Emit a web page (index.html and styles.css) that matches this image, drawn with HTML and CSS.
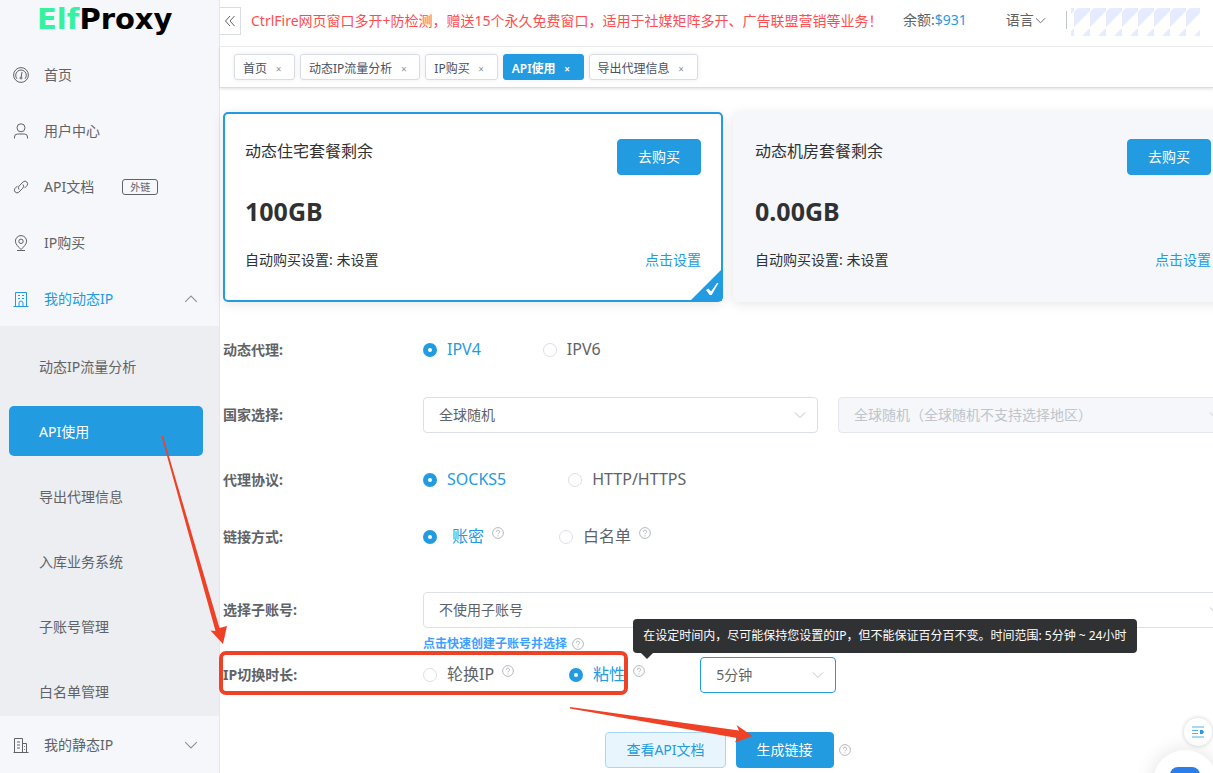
FILE: index.html
```html
<!DOCTYPE html>
<html lang="zh-CN">
<head>
<meta charset="utf-8">
<title>ElfProxy - API使用</title>
<link rel="stylesheet" href="styles.css">
</head>
<body>
<svg class="defs" aria-hidden="true">
  <symbol id="help" viewBox="0 0 12 12"><circle cx="6" cy="6" r="5.4" fill="none" stroke="currentColor"/><path d="M4.4 4.8a1.6 1.6 0 1 1 2.3 1.4c-.5.3-.7.5-.7 1.1M6 8.3v1" fill="none" stroke="currentColor"/></symbol>
  <symbol id="down" viewBox="0 0 12 12"><path d="M1 3.500l5 5 5-5" fill="none" stroke="currentColor"/></symbol>
</svg>
<div class="app">
  <aside class="sidebar">
    <div class="logo"><span class="logo-elf">Elf</span>Proxy</div>
    <nav class="menu">
      <a class="item" href="#"><svg class="icon" viewBox="0 0 16 16"><circle cx="8" cy="8" r="7.400"/><path d="M4 11.800a5.300 5.300 0 1 1 8 0M8.200 10l.8-5"/><circle cx="8" cy="11" r="1"/></svg>首页</a>
      <a class="item" href="#"><svg class="icon" viewBox="0 0 16 16"><circle cx="8" cy="4.800" r="4"/><path d="M1.500 15.500v-1.500a3 3 0 0 1 3-3h7a3 3 0 0 1 3 3v1.500"/></svg>用户中心</a>
      <a class="item" href="#"><svg class="icon" viewBox="0 0 16 16"><path d="M6 10.500a3 3 0 0 1 .2-3.700l4-4a2.700 2.700 0 0 1 3.800 3.800l-2.500 2.500M10 5.500a3 3 0 0 1-.2 3.700l-4 4A2.700 2.700 0 0 1 2 9.400l2.500-2.500"/></svg>API文档<span class="tag">外链</span></a>
      <a class="item" href="#"><svg class="icon" viewBox="0 0 16 16"><path d="M8 14.500C5 11.500 2.400 9 2.400 6.200a5.600 5.600 0 0 1 11.200 0C13.600 9 11 11.500 8 14.500zM4 15.500h8"/><circle cx="8" cy="6.300" r="2.200"/></svg>IP购买</a>
      <a class="item open" href="#"><svg class="icon" viewBox="0 0 16 16"><path d="M2.500 15V1.500h11V15M.5 15.500h15M5 4.500h2M9 4.500h2M5 7.500h2M9 7.500h2M6 15v-3a2 2 0 0 1 4 0v3"/></svg>我的动态IP<svg class="caret up"><use href="#down"/></svg></a>
    </nav>
    <nav class="submenu">
      <a class="subitem" href="#">动态IP流量分析</a>
      <a class="subitem active" href="#">API使用</a>
      <a class="subitem" href="#">导出代理信息</a>
      <a class="subitem" href="#">入库业务系统</a>
      <a class="subitem" href="#">子账号管理</a>
      <a class="subitem" href="#">白名单管理</a>
    </nav>
    <nav class="menu">
      <a class="item" href="#"><svg class="icon" viewBox="0 0 16 16"><path d="M1.500 15V1.500h8V15M9.500 6.500h4V15M.5 15.500h15M4 5h3M4 8h3M4 11h3M11.500 9v.8M11.500 12v.8"/></svg>我的静态IP<svg class="caret"><use href="#down"/></svg></a>
    </nav>
  </aside>

  <main class="main">
    <header class="topbar">
      <button class="collapse" aria-label="收起菜单"><svg class="collapse-icon" viewBox="0 0 12 12"><path d="M6 1L1.500 6 6 11M10.500 1L6 6l4.500 5"/></svg></button>
      <p class="notice">CtrlFire网页窗口多开+防检测，赠送15个永久免费窗口，适用于社媒矩阵多开、广告联盟营销等业务！</p>
      <span class="balance">余额:<b class="amount">$931</b></span>
      <button class="lang">语言<svg class="lang-caret"><use href="#down"/></svg></button>
      <svg class="account" aria-hidden="true"><defs><pattern id="mosaic" x="3" width="16" height="28" patternUnits="userSpaceOnUse"><path d="M4 0h12v3L0 19V4zM8 28l8-8v8z" fill="#e6ecff"/></pattern></defs><rect width="129" height="28" fill="url(#mosaic)"/></svg>
    </header>
    <nav class="tabs">
      <a class="tab" href="#">首页<span class="close">×</span></a>
      <a class="tab" href="#">动态IP流量分析<span class="close">×</span></a>
      <a class="tab" href="#">IP购买<span class="close">×</span></a>
      <a class="tab current" href="#">API使用<span class="close">×</span></a>
      <a class="tab" href="#">导出代理信息<span class="close">×</span></a>
    </nav>

    <div class="content">
      <section class="cards">
        <article class="card selected">
          <div class="card-head"><h2 class="card-title">动态住宅套餐剩余</h2><button class="btn buy">去购买</button></div>
          <div class="traffic">100GB</div>
          <div class="card-foot"><span>自动购买设置: 未设置</span><a class="link" href="#">点击设置</a></div>
          <svg class="corner" viewBox="0 0 32 32"><path class="corner-fill" d="M32 0v32H0z"/><path class="corner-tick" d="M16 21l2.500-1.500 2.500 3 6-8.500 1.500 0-6.800 12h-2z"/></svg>
        </article>
        <article class="card">
          <div class="card-head"><h2 class="card-title">动态机房套餐剩余</h2><button class="btn buy">去购买</button></div>
          <div class="traffic">0.00GB</div>
          <div class="card-foot"><span>自动购买设置: 未设置</span><a class="link" href="#">点击设置</a></div>
        </article>
      </section>

      <form class="form">
        <div class="row">
          <span class="label">动态代理:</span>
          <div class="radios">
            <label class="radio"><input type="radio" name="ip" checked><span>IPV4</span></label>
            <label class="radio"><input type="radio" name="ip"><span>IPV6</span></label>
          </div>
        </div>
        <div class="row">
          <label class="label" for="country">国家选择:</label>
          <div class="fields">
            <div class="select"><select id="country"><option>全球随机</option></select><svg class="arrow"><use href="#down"/></svg></div>
            <div class="select disabled"><select aria-label="地区" disabled><option>全球随机（全球随机不支持选择地区）</option></select><svg class="arrow"><use href="#down"/></svg></div>
          </div>
        </div>
        <div class="row">
          <span class="label">代理协议:</span>
          <div class="radios">
            <label class="radio"><input type="radio" name="proto" checked><span>SOCKS5</span></label>
            <label class="radio"><input type="radio" name="proto"><span>HTTP/HTTPS</span></label>
          </div>
        </div>
        <div class="row tight">
          <span class="label">链接方式:</span>
          <div class="radios hinted">
            <label class="radio"><input type="radio" name="auth" checked><span class="indent">账密</span><svg class="help raised"><use href="#help"/></svg></label>
            <label class="radio"><input type="radio" name="auth"><span>白名单</span><svg class="help raised"><use href="#help"/></svg></label>
          </div>
        </div>
        <div class="row wide">
          <label class="label" for="sub">选择子账号:</label>
          <div class="fields">
            <div class="select"><select id="sub"><option>不使用子账号</option></select><svg class="arrow"><use href="#down"/></svg></div>
          </div>
        </div>
        <div class="create"><a class="create-link" href="#">点击快速创建子账号并选择</a><svg class="help"><use href="#help"/></svg></div>
        <div class="row duration">
          <span class="label">IP切换时长:</span>
          <div class="radios hinted">
            <label class="radio"><input type="radio" name="mode"><span>轮换IP</span><svg class="help raised"><use href="#help"/></svg></label>
            <label class="radio"><input type="radio" name="mode" checked><span>粘性</span><span class="anchor"><svg class="help raised"><use href="#help"/></svg><span class="tooltip" role="tooltip">在设定时间内，尽可能保持您设置的IP，但不能保证百分百不变。时间范围: 5分钟 ~ 24小时</span></span></label>
            <div class="select minutes"><select aria-label="时长"><option>5分钟</option></select><svg class="arrow"><use href="#down"/></svg></div>
          </div>
        </div>
        <div class="actions">
          <button type="button" class="btn plain">查看API文档</button>
          <button type="button" class="btn">生成链接</button>
          <svg class="help"><use href="#help"/></svg>
        </div>
      </form>
    </div>
  </main>
</div>

<button class="float-list" aria-label="公告"><svg class="float-icon" viewBox="0 0 14 14"><path d="M1 2h12M1 5.500h6M1 8.500h6M1 12h12"/><path class="solid" d="M9 5h2.500L13 7l-1.500 2H9z"/></svg></button>
<button class="float-chat" aria-label="客服"><span class="chat-shape"></span></button>

<svg class="marks" viewBox="0 0 1213 773" aria-hidden="true">
  <rect x="221" y="653" width="405" height="40" rx="5"/>
  <path d="M161.500 436h1.500L219.500 628 227 626 223 644 210.500 630.500 215.500 631z"/>
  <path d="M570 707L739 730.500 736.500 725 752.500 736 735 742.500 737 738 570 708.500z"/>
</svg>
</body>
</html>
```
FILE: styles.css
```css
* { box-sizing: border-box; }
body {
  margin: 0;
  height: 100vh;
  overflow: hidden;
  background: #fff;
  color: #606266;
  font: 14px/20px "Noto Sans", "Noto Sans CJK SC", sans-serif;
}
button, select { font: inherit; color: inherit; }
button { cursor: pointer; }
a { color: inherit; text-decoration: none; }
svg { display: block; flex: none; }
.defs { position: absolute; width: 0; height: 0; }
.app { display: flex; min-height: 100vh; }

.sidebar {
  flex: none;
  width: 220px;
  background: #f5f7fb;
  border-right: 1px solid #e4e6ea;
}
.logo {
  height: 46px;
  padding-left: 37px;
  font: 700 29px/39px "DejaVu Sans", sans-serif;
  color: #000;
}
.logo-elf { color: #36f2a0; }
.item {
  display: flex;
  align-items: center;
  height: 56px;
  padding: 2px 21px 0 13px;
}
.icon {
  width: 16px;
  height: 16px;
  margin-right: 15px;
  fill: none;
  stroke: currentColor;
}
.open { color: #229be0; }
.caret { width: 14px; height: 14px; margin-left: auto; color: #909399; }
.up { transform: rotate(180deg); }
.tag {
  margin-left: 28px;
  padding: 0 7px;
  border: 1px solid #606266;
  border-radius: 3px;
  font-size: 10px;
  line-height: 14px;
}
.submenu {
  display: flex;
  flex-direction: column;
  gap: 15px;
  padding: 15px 16px 0 9px;
  background: #eceef2;
}
.subitem {
  height: 50px;
  padding-left: 30px;
  border-radius: 5px;
  line-height: 52px;
}
.active { background: #229be0; color: #fff; }

.main { flex: 1; min-width: 0; }
.topbar {
  display: flex;
  align-items: center;
  height: 47px;
  padding-bottom: 4px;
  border-bottom: 1px solid #f0f0f0;
}
.collapse {
  width: 21px;
  height: 28px;
  padding: 0 4px;
  border: 1px solid #d8dce5;
  border-left: 0;
  background: #fff;
}
.collapse-icon { width: 12px; height: 12px; fill: none; stroke: #606266; }
.notice { margin: 0 0 0 10px; color: #ff4d4f; white-space: nowrap; flex: none; width: 652px; }
.balance { padding-bottom: 2px; white-space: nowrap; }
.amount { font-weight: 400; color: #229be0; }
.lang {
  display: flex;
  align-items: center;
  gap: 1px;
  margin: 0 0 2px 39px;
  padding: 0 20px 0 0;
  border: 0;
  border-right: 1px solid #c0c4cc;
  background: none;
  line-height: 18px;
  white-space: nowrap;
}
.lang-caret { width: 11px; height: 11px; }
.account { width: 129px; height: 28px; margin: 2px 0 0 4px; }

.tabs {
  display: flex;
  align-items: center;
  gap: 5px;
  height: 41px;
  padding-left: 14px;
  border-bottom: 1px solid #d8dce5;
  box-shadow: 0 1px 3px rgba(0, 0, 0, .12);
}
.tab {
  display: flex;
  align-items: center;
  height: 26px;
  padding: 3px 12px 0 8px;
  border: 1px solid #d8dce5;
  border-radius: 3px;
  box-shadow: 0 0 4px rgba(0, 0, 0, .08);
  color: #495060;
  font-size: 12px;
}
.close { width: 7px; margin-left: 8px; color: #909399; font-size: 10px; text-align: center; }
.current { background: #229be0; border-color: #229be0; color: #fff; font-weight: 600; }
.current .close { color: #fff; }

.content { margin-right: -20px; padding: 24px 0 0 3px; }
.cards { display: grid; grid-template-columns: 1fr 1fr; gap: 10px; }
.card {
  position: relative;
  height: 190px;
  padding: 25px 20px 0;
  border: 2px solid #f5f7fb;
  border-radius: 5px;
  background: #f5f7fb;
  box-shadow: 0 2px 12px rgba(0, 0, 0, .1);
  color: #303133;
}
.selected { border-color: #229be0; background: #fff; }
.card-head { display: flex; justify-content: space-between; }
.card-title { margin: 0; font-size: 16px; font-weight: 400; line-height: 24px; }
.traffic { margin-top: 19px; font-size: 25px; font-weight: 700; line-height: 34px; }
.card-foot { display: flex; justify-content: space-between; margin-top: 22px; }
.link { color: #229be0; }
.corner { position: absolute; right: -1px; bottom: -1px; width: 32px; height: 32px; }
.corner-fill { fill: #229be0; }
.corner-tick { fill: #fff; }

.btn {
  height: 36px;
  padding: 0 20px;
  border: 1px solid #229be0;
  border-radius: 4px;
  background: #229be0;
  color: #fff;
}
.plain { border-color: #a7d7f3; background: #e9f5fc; color: #229be0; }

.form { padding-top: 1px; }
.row { display: flex; align-items: center; height: 36px; margin-top: 29px; }
.tight { margin-top: 21px; }
.wide { margin-top: 37px; }
.duration { margin-top: 5px; }
.label { flex: none; width: 200px; font-weight: 700; }
.radios { display: flex; align-items: center; gap: 62px; }
.hinted { gap: 55px; }
.radio { display: flex; align-items: center; font-size: 16px; line-height: 22px; }
.radio input {
  appearance: none;
  flex: none;
  width: 14px;
  height: 14px;
  margin: 0 10px 0 0;
  border: 1px solid #dcdfe6;
  border-radius: 50%;
  background: #fff;
}
.radio input:checked { border: 5px solid #229be0; }
.radio input + span { padding-bottom: 2px; }
.radio input:checked + span { color: #229be0; }
.radio .indent { padding-left: 5px; }
.help { width: 12px; height: 12px; color: #b4b8bf; }
.raised { margin: 0 0 8px 8px; }
.anchor { position: relative; }
.tooltip {
  position: absolute;
  left: 8px;
  bottom: 32px;
  padding: 7px 10px;
  border-radius: 4px;
  background: #303133;
  color: #fff;
  font-size: 12px;
  line-height: 20px;
  white-space: nowrap;
  z-index: 2;
}
.tooltip::after {
  content: "";
  position: absolute;
  left: 8px;
  top: 100%;
  border: 6px solid transparent;
  border-top-color: #303133;
  border-bottom: 0;
}
.fields { display: flex; flex: 1; gap: 20px; }
.select { position: relative; flex: 1; }
.select select {
  appearance: none;
  width: 100%;
  height: 36px;
  padding: 0 15px;
  border: 1px solid #dcdfe6;
  border-radius: 4px;
  background: #fff;
}
.arrow { position: absolute; right: 12px; top: 12px; width: 12px; height: 12px; color: #c0c4cc; pointer-events: none; }
.disabled select { background: #f5f7fa; border-color: #e4e7ed; color: #c0c4cc; opacity: 1; }
.minutes { flex: none; width: 136px; font-size: 14px; }
.minutes select { border-color: #229be0; }
.create { display: flex; align-items: center; gap: 5px; height: 16px; margin: 8px 0 0 200px; }
.create-link { color: #409eff; font-size: 12px; font-weight: 700; }
.actions { display: flex; justify-content: center; align-items: center; gap: 10px; margin-top: 39px; }
.actions .help { margin-left: -5px; }

.float-list, .float-chat { position: fixed; border: 0; border-radius: 50%; background: #fff; padding: 0; }
.float-list {
  right: 1px;
  bottom: 27px;
  width: 28px;
  height: 28px;
  box-shadow: 0 0 4px rgba(0, 0, 0, .2);
}
.float-icon { width: 14px; height: 14px; margin: auto; fill: none; stroke: #4db2e8; }
.solid { fill: #229be0; stroke: none; }
.float-chat {
  right: -4px;
  bottom: -41px;
  width: 64px;
  height: 64px;
  box-shadow: 0 0 20px rgba(0, 0, 0, .12);
}
.chat-shape {
  position: absolute;
  left: 17px;
  top: 17px;
  width: 30px;
  height: 28px;
  border-radius: 8px;
  background: #2b7de9;
}
.marks { position: absolute; left: 0; top: 0; width: 1213px; height: 773px; pointer-events: none; z-index: 3; }
.marks rect { fill: none; stroke: #ee4126; stroke-width: 4px; }
.marks path { fill: #ee4126; }
```
